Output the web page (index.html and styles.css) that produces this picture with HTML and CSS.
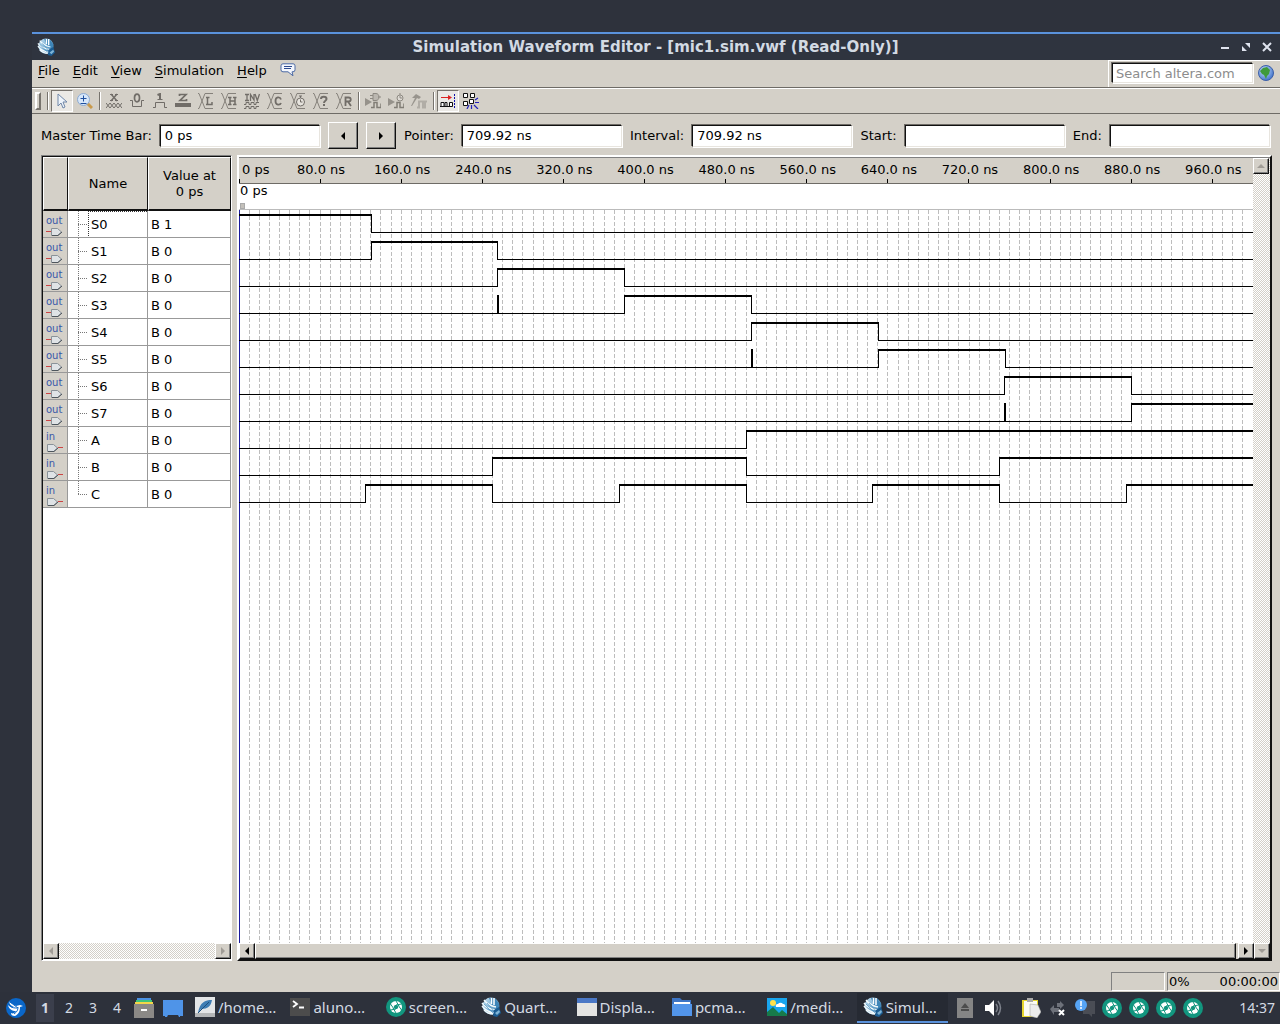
FILE: index.html
```
<!DOCTYPE html>
<html lang="en">
<head>
<meta charset="utf-8">
<title>Simulation Waveform Editor</title>
<link rel="stylesheet" href="styles.css">
</head>
<body>
<svg class="defs" aria-hidden="true">
  <defs>
    <linearGradient id="globeFill" x1="0" y1="0" x2="1" y2="1">
      <stop offset="0" stop-color="#cfe6f4"/><stop offset=".55" stop-color="#6fa9d0"/><stop offset="1" stop-color="#1d5f96"/>
    </linearGradient>
    <radialGradient id="earthFill" cx=".4" cy=".35" r=".7">
      <stop offset="0" stop-color="#cfe2ff"/><stop offset="1" stop-color="#3a6fc8"/>
    </radialGradient>
  </defs>
  <symbol id="quartus" viewBox="0 0 20 20">
    <circle cx="10" cy="9" r="8.500" fill="url(#globeFill)"/>
    <path d="M8 1l6 0 4 6-1 6-6-5z" fill="#3d85b8"/>
    <path d="M10.500 1v6M13 1v7" stroke="#fff" stroke-width="1.500"/>
    <path d="M1 6c3 4 8 6 13 7M1 9c3 4 7 6 12 7M3 13c3 3 5 4 9 4M3 3c3 4 7 6 12 7" fill="none" stroke="#f2fafd" stroke-width="1.400"/>
    <path d="M3 7l9 9M6 6l8 9" stroke="#4b8fbe" stroke-width=".7"/>
    <path d="M13 13l5-3 2 6-4 4-4-1z" fill="#1b5c92"/>
    <path d="M14 16l4-3 1 2-3 3z" fill="#7fb4d6"/>
  </symbol>
  <symbol id="aperture" viewBox="0 0 20 20">
    <circle cx="10" cy="10" r="10" fill="#12967f"/>
    <circle cx="10" cy="10" r="6" fill="#fff"/>
    <path d="M10 4l3 5M15.500 7l-5.500 1M15.500 13l-3.500-5M10 16l-3-5M4.500 13l5.500-1M4.500 7l3.500 5" stroke="#12967f" stroke-width="1"/>
    <path d="M8.800 8h2.400l1.200 2-1.200 2H8.800l-1.200-2z" fill="#12967f"/>
  </symbol>
  <symbol id="pin-out" viewBox="0 0 18 16">
    <path d="M0 10.500h5" stroke="#c44" />
    <path d="M5.500 7.500h6l4 3.500-4 3.500h-6z" fill="#dfe3e6" stroke="#8a9299"/>
    <path d="M6 14.500h6l4-3.500" fill="none" stroke="#4e565d"/>
  </symbol>
  <symbol id="pin-in" viewBox="0 0 18 16">
    <path d="M12 10.500h5" stroke="#c44"/>
    <path d="M1.500 7.500h6l4 3.500-4 3.500h-6z" fill="#dfe3e6" stroke="#8a9299"/>
    <path d="M2 14.500h6l4-3.500" fill="none" stroke="#4e565d"/>
  </symbol>
  <symbol id="bus" viewBox="0 0 16 16">
    <path d="M0 .5h1l6 15h8M0 15.500h1L7 .5h8" fill="none" stroke="#85817b"/>
  </symbol>
</svg>

<main class="window">
  <header class="titlebar">
    <svg class="app-icon"><use href="#quartus"/></svg>
    <h1>Simulation Waveform Editor - [mic1.sim.vwf (Read-Only)]</h1>
    <div class="window-controls">
      <button type="button" aria-label="Minimize"><svg viewBox="0 0 10 10"><path d="M1 6h8" stroke-width="2"/></svg></button>
      <button type="button" aria-label="Restore"><svg viewBox="0 0 10 10"><path d="M4 1h5v5zM1 4v5h5z" fill="#dfe3ee" stroke="none"/></svg></button>
      <button type="button" aria-label="Close"><svg viewBox="0 0 10 10"><path d="M1 1l8 8M9 1L1 9" stroke-width="2"/></svg></button>
    </div>
  </header>

  <div class="menubar">
    <nav>
      <a href="#file"><u>F</u>ile</a>
      <a href="#edit"><u>E</u>dit</a>
      <a href="#view"><u>V</u>iew</a>
      <a href="#simulation"><u>S</u>imulation</a>
      <a href="#help"><u>H</u>elp</a>
      <a href="#feedback" aria-label="Feedback"><svg class="bubble" viewBox="0 0 16 14"><path d="M3 .8h10q2 0 2 2v4q0 2-2 2h-1l1 4-5-4H3q-2 0-2-2v-4q0-2 2-2z" fill="#f4f7fd" stroke="#4c6aa5"/><path d="M4 3.500h8M4 5.500h7" stroke="#2c4a90"/></svg></a>
    </nav>
    <form class="search">
      <input type="text" aria-label="Search altera.com" placeholder="Search altera.com">
      <button type="button" aria-label="Search"><svg viewBox="0 0 16 16"><circle cx="8" cy="8" r="7.500" fill="url(#earthFill)" stroke="#3c5fa8"/><path d="M2 6l3-3 4-1 3 3-1 4-2 2-1 3-2-4-2-1z" fill="#3f9a3c"/></svg></button>
    </form>
  </div>

  <div class="toolbar" role="toolbar" aria-label="Waveform tools">
    <span class="grip"></span><span class="divider"></span>
    <button type="button" class="pressed" aria-label="Selection tool"><svg viewBox="0 0 16 16"><path d="M4 1v12l3-3 2 5 2-1-2-5h4z" fill="#eef4fb" stroke="#7087a8"/></svg></button>
    <button type="button" aria-label="Zoom tool"><svg viewBox="0 0 16 16"><path d="M10 10l5 5" stroke="#c99a4c" stroke-width="3"/><circle cx="6.500" cy="6.500" r="6" fill="#d7e7fa" stroke="#8ba9d2"/><path d="M3.500 5.500h6M6.500 2.500v6M3.500 10.500h6" stroke="#1f4f9f"/></svg></button>
    <span class="divider"></span>
    <button type="button" aria-label="Forcing unknown"><svg viewBox="0 0 16 16"><path d="M4 1.500h3M9 1.500h3M4 7.500h3M9 7.500h3" stroke="#716d68"/><path d="M5 1l6 7M11 1L5 8" stroke="#716d68" stroke-width="1.500"/><path d="M0 10l4 5 4-5 4 5 4-5M0 15l4-5 4 5 4-5 4 5" fill="none" stroke="#716d68"/></svg></button>
    <button type="button" aria-label="Forcing low"><svg viewBox="0 0 16 16"><ellipse cx="8" cy="5" rx="2.500" ry="3.800" fill="none" stroke="#716d68" stroke-width="1.700"/><path d="M1 7.500h2.500v6h9v-6H15" fill="none" stroke="#716d68"/></svg></button>
    <button type="button" aria-label="Forcing high"><svg viewBox="0 0 16 16"><path d="M5.500 2L8 1v6" fill="none" stroke="#716d68" stroke-width="2"/><path d="M5.500 6.500h5M1 14.500h2.500v-5h9v5H15" fill="none" stroke="#716d68"/></svg></button>
    <button type="button" aria-label="High impedance"><svg viewBox="0 0 16 16"><path d="M4.500 3V1.500H11L5 7.500h6.500V6" fill="none" stroke="#716d68" stroke-width="1.700"/><path d="M0 12h16" stroke="#716d68" stroke-width="4"/></svg></button>
    <button type="button" aria-label="Weak low"><svg viewBox="0 0 16 16"><use href="#bus"/><path d="M8 4.500h3.500M9.500 4.500v7M8 11.500h6V9" fill="none" stroke="#716d68" stroke-width="1.500"/></svg></button>
    <button type="button" aria-label="Weak high"><svg viewBox="0 0 16 16"><use href="#bus"/><path d="M7 4.500h3.500M12 4.500h3.500M7 11.500h3.500M12 11.500h3.500M9 4.500v7M14 4.500v7M9 8h5" fill="none" stroke="#716d68" stroke-width="1.500"/></svg></button>
    <button type="button" aria-label="Invert"><svg viewBox="0 0 16 16"><path d="M1 1.500h4M3 1v6M1 7.500h4M6.500 8V1.500L10 7V1M11 1l2.300 6.500L15.500 1" fill="none" stroke="#716d68" stroke-width="1.300"/><path d="M0 11.500h2v-2h3v2h2v-2h3v2h2v-2h3M0 15.500h2v-2h3v2h2v-2h3v2h2v-2h3" fill="none" stroke="#716d68"/></svg></button>
    <button type="button" aria-label="Count value"><svg viewBox="0 0 16 16"><use href="#bus"/><path d="M14 6.500c-1-3-5.500-3-5.500 1.500s4.500 4.500 5.500 2" fill="none" stroke="#716d68" stroke-width="1.800"/></svg></button>
    <button type="button" aria-label="Overwrite clock"><svg viewBox="0 0 16 16"><use href="#bus"/><circle cx="10.500" cy="9" r="4" fill="#e7e4de" stroke="#716d68"/><path d="M10.500 3v2M9 3h3M10.500 6.500V9h2" fill="none" stroke="#716d68"/></svg></button>
    <button type="button" aria-label="Arbitrary value"><svg viewBox="0 0 16 16"><use href="#bus"/><path d="M8 6c0-3 5.500-3 5.500 0 0 2-2.500 1.500-2.500 4M11 11v2" fill="none" stroke="#716d68" stroke-width="2"/></svg></button>
    <button type="button" aria-label="Random values"><svg viewBox="0 0 16 16"><use href="#bus"/><path d="M9.500 13V4.500h3c3 0 3 4 0 4h-3M12 8.500l3 4.500" fill="none" stroke="#716d68" stroke-width="1.800"/></svg></button>
    <span class="divider"></span>
    <button type="button" aria-label="Run functional simulation"><svg viewBox="0 0 16 16"><path d="M0 5l7 4-7 4z" fill="#96928b"/><path d="M5 2.500h3M5 5.500h3M8 .5h3c4 0 4 7 0 7H8zM13 4h3" fill="#bbb7b0" stroke="#8d8982"/><path d="M6 14.500h3v-5h3v5h4v-4" fill="none" stroke="#817d76" stroke-width="1.500"/></svg></button>
    <button type="button" aria-label="Run timing simulation"><svg viewBox="0 0 16 16"><path d="M0 5l7 4-7 4z" fill="#96928b"/><circle cx="12" cy="5" r="3" fill="#dedad4" stroke="#8d8982"/><path d="M12 0v2M12 3v2h2" stroke="#8d8982" fill="none"/><path d="M6 14.500h3v-5h3v5h4v-4" fill="none" stroke="#817d76" stroke-width="1.500"/></svg></button>
    <button type="button" aria-label="Generate testbench"><svg viewBox="0 0 16 16"><path d="M1 5l4-4 5 3-2 2-2-1-5 8H0l4-8z" fill="#98948d"/><path d="M6 14.500h2v-6h4v6h2v-6h2" fill="none" stroke="#b1ada6" stroke-width="2"/></svg></button>
    <span class="divider"></span>
    <button type="button" class="pressed" aria-label="Snap to transition"><svg viewBox="0 0 16 16"><path d="M1 4.500h8" stroke="#d22"/><path d="M8 2l4 2.500L8 7z" fill="#d22"/><path d="M1 9.500h3v4H1zM5 9.500h2v4H5zM9.500 9.500h3v4h-3z" fill="#fff" stroke="#111"/><path d="M0 13.500h10" stroke="#111"/><path d="M14.500 1v14" stroke="#11a" stroke-dasharray="2 1"/></svg></button>
    <button type="button" aria-label="Snap to grid"><svg viewBox="0 0 16 16"><path d="M.5.500h4v4h-4zM7.500.500h4v4h-4zM.5 8.500h4v4h-4zM6.500 6.500h4v4h-4z" fill="#fff" stroke="#111"/><path d="M12 7l3-2M12 9.500h4M11 12l4 4M8.500 12v4M6 12l-2 4" stroke="#22b" stroke-width="1.200"/></svg></button>
  </div>

  <form class="timebar">
    <label for="master">Master Time Bar:</label><input id="master" type="text" value="0 ps">
    <button type="button" class="raised" aria-label="Previous transition"><i class="arrow left"></i></button>
    <button type="button" class="raised" aria-label="Next transition"><i class="arrow right"></i></button>
    <label for="pointer">Pointer:</label><input id="pointer" type="text" value="709.92 ns">
    <label for="interval">Interval:</label><input id="interval" type="text" value="709.92 ns">
    <label for="start">Start:</label><input id="start" type="text">
    <label for="end">End:</label><input id="end" type="text">
  </form>

  <div class="panes">
    <section class="names">
      <table>
        <thead><tr><th class="kind"></th><th class="name">Name</th><th class="value">Value at<br>0 ps</th></tr></thead>
        <tbody>
          <tr class="focused"><td><span>out</span><svg><use href="#pin-out"/></svg></td><td>S0</td><td>B 1</td></tr>
          <tr><td><span>out</span><svg><use href="#pin-out"/></svg></td><td>S1</td><td>B 0</td></tr>
          <tr><td><span>out</span><svg><use href="#pin-out"/></svg></td><td>S2</td><td>B 0</td></tr>
          <tr><td><span>out</span><svg><use href="#pin-out"/></svg></td><td>S3</td><td>B 0</td></tr>
          <tr><td><span>out</span><svg><use href="#pin-out"/></svg></td><td>S4</td><td>B 0</td></tr>
          <tr><td><span>out</span><svg><use href="#pin-out"/></svg></td><td>S5</td><td>B 0</td></tr>
          <tr><td><span>out</span><svg><use href="#pin-out"/></svg></td><td>S6</td><td>B 0</td></tr>
          <tr><td><span>out</span><svg><use href="#pin-out"/></svg></td><td>S7</td><td>B 0</td></tr>
          <tr><td><span>in</span><svg><use href="#pin-in"/></svg></td><td>A</td><td>B 0</td></tr>
          <tr><td><span>in</span><svg><use href="#pin-in"/></svg></td><td>B</td><td>B 0</td></tr>
          <tr><td><span>in</span><svg><use href="#pin-in"/></svg></td><td>C</td><td>B 0</td></tr>
        </tbody>
      </table>
      <div class="scroll horizontal">
        <button type="button" disabled aria-label="Scroll names left"><i class="arrow left"></i></button>
        <span class="track"></span>
        <button type="button" disabled aria-label="Scroll names right"><i class="arrow right"></i></button>
      </div>
    </section>

    <section class="waves">
      <div class="view">
        <div class="plot">
          <div class="ruler">
            <span>0 ps</span><span>80.0 ns</span><span>160.0 ns</span><span>240.0 ns</span><span>320.0 ns</span><span>400.0 ns</span><span>480.0 ns</span><span>560.0 ns</span><span>640.0 ns</span><span>720.0 ns</span><span>800.0 ns</span><span>880.0 ns</span><span>960.0 ns</span>
          </div>
          <div class="master-strip"><span>0 ps</span><i class="handle"></i></div>
          <div class="canvas">
            <svg class="grid" aria-hidden="true"></svg>
            <div class="signals"></div>
          </div>
        </div>
        <div class="scroll vertical">
          <button type="button" disabled aria-label="Scroll up"><i class="arrow up"></i></button>
          <span class="track"></span>
        </div>
      </div>
      <div class="scroll horizontal">
        <button type="button" aria-label="Scroll waves left"><i class="arrow left"></i></button>
        <span class="thumb"></span>
        <button type="button" aria-label="Scroll waves right"><i class="arrow right"></i></button>
        <button type="button" disabled aria-label="Scroll down"><i class="arrow down"></i></button>
      </div>
    </section>
  </div>

  <footer class="status"><span class="well message"></span><span class="well progress"><span>0%</span><span>00:00:00</span></span></footer>
</main>

<footer class="taskbar">
  <button type="button" class="start" aria-label="Menu"><svg viewBox="0 0 20 20"><circle cx="10" cy="10" r="10" fill="#0a67c9"/><path d="M3 4l7 4 4-1 3 1-3 1c0 4-1 7-5 9-3 0-4-1-4-3 2 1 4 0 5-2-4 0-7-2-8-6 2 2 4 3 6 2-3-1-5-3-5-6z" fill="#fff"/><path d="M4 4l8 6M4 8c2 2 5 2 7 2M12 9c0 3-1 5-4 7" stroke="#0a67c9" fill="none"/></svg></button>
  <div class="desktops">
    <button type="button" class="current">1</button><button type="button">2</button><button type="button">3</button><button type="button">4</button>
  </div>
  <div class="launchers">
    <button type="button" aria-label="Files"><svg viewBox="0 0 20 20"><path d="M3 0h14v3H3z" fill="#4b91e2"/><path d="M2 2h16v3H2z" fill="#3fc47a"/><path d="M1 4h18v3H1z" fill="#f3d648"/><path d="M0 6h20v14H0z" fill="#8b8986"/><path d="M7 11h6v2H7z" fill="#fff"/></svg></button>
    <button type="button" aria-label="Show desktop"><svg viewBox="0 0 20 20"><path d="M0 2h20v16h-3v1h-1l-1-2H5l-1 2H2v-1H0z" fill="#4f94e8"/></svg></button>
  </div>
  <div class="tasks">
    <button type="button"><svg viewBox="0 0 20 20"><path d="M0 0h20v20H0z" fill="#e3e5e7"/><path d="M0 16h20v4H0z" fill="#b4b6b8"/><path d="M3 16C5 5 10 3 17 3c-1 6-4 9-11 9" fill="#3f7db4"/><path d="M3 16L14 5" stroke="#1d4e7c"/></svg><span>/home…</span></button>
    <button type="button"><svg viewBox="0 0 20 20"><path d="M0 1h20v18H0z" fill="#4c4c4c"/><path d="M3 4l4 3-4 3M9 10.500h5" fill="none" stroke="#fff" stroke-width="1.800"/></svg><span>aluno…</span></button>
    <button type="button"><svg viewBox="0 0 20 20"><use href="#aperture"/></svg><span>screen…</span></button>
    <button type="button"><svg viewBox="0 0 20 20"><use href="#quartus"/></svg><span>Quart…</span></button>
    <button type="button"><svg viewBox="0 0 20 20"><path d="M0 1h20v18H0z" fill="#e4e4e2"/><path d="M0 1h20v5H0z" fill="#4b78c6"/></svg><span>Displa…</span></button>
    <button type="button"><svg viewBox="0 0 20 20"><path d="M0 1h8l2 2h9v14H0z" fill="#3c74c4"/><path d="M2 5h16v2H2z" fill="#fff"/><path d="M0 7h20v12H0z" fill="#5295ea"/></svg><span>pcma…</span></button>
    <button type="button"><svg viewBox="0 0 20 20"><path d="M0 1h20v18H0z" fill="#19a5ee"/><circle cx="6" cy="6" r="3" fill="#ffe14a"/><path d="M9 10a2 2 0 012-3 3 3 0 015 0 2 2 0 012 3z" fill="#fff"/><path d="M0 19v-4l6-5 6 6 3-3 5 4v2z" fill="#177a4a"/></svg><span>/medi…</span></button>
    <button type="button" class="active"><svg viewBox="0 0 20 20"><use href="#quartus"/></svg><span>Simul…</span></button>
  </div>
  <div class="tray">
    <button type="button" aria-label="Eject"><svg viewBox="0 0 20 20"><path d="M2 0h16v20H2z" fill="#858585"/><path d="M10 5l4 5H6zM6 11h8v2H6z" fill="#4c4c4c"/></svg></button>
    <button type="button" aria-label="Volume"><svg viewBox="0 0 20 20"><path d="M1 7h4l5-5v16l-5-5H1z" fill="#fff"/><path d="M12 6q3 4 0 8M14 3q5 7 0 14" fill="none" stroke="#7d818b" stroke-width="1.500"/></svg></button>
  </div>
  <div class="tray wide">
    <button type="button" aria-label="Clipboard"><svg viewBox="0 0 20 20"><path d="M1 2h16v17H1z" fill="#e6d52f"/><path d="M3 3h13v15H3z" fill="#fbfbf4"/><path d="M6 0h6v4H6z" fill="#aaa"/><path d="M9 6l8 1 3 7-4 6-7-2z" fill="#ececec" stroke="#999" stroke-width=".5"/></svg></button>
    <button type="button" aria-label="Network"><svg viewBox="0 0 20 20"><path d="M2 11l4-4v3h5v4H6v3zM16 7l-4-4v2H9v4h3v2z" fill="#6d717a"/><path d="M11 12l5 5M16 12l-5 5" stroke="#fff" stroke-width="2"/></svg></button>
    <button type="button" aria-label="Notifications"><svg viewBox="0 0 20 20"><path d="M8 3h12v13h-3v3l-3-3H8z" fill="#4a4d55"/><circle cx="6" cy="7" r="6" fill="#56a4f5"/><path d="M6 3v5M6 9v2" stroke="#fff" stroke-width="1.500"/></svg></button>
    <button type="button" aria-label="Screenshot 1"><svg><use href="#aperture"/></svg></button>
    <button type="button" aria-label="Screenshot 2"><svg><use href="#aperture"/></svg></button>
    <button type="button" aria-label="Screenshot 3"><svg><use href="#aperture"/></svg></button>
    <button type="button" aria-label="Screenshot 4"><svg><use href="#aperture"/></svg></button>
  </div>
  <time>14:37</time>
</footer>
<script src="script.js"></script>
</body>
</html>
```
FILE: styles.css
```
* { box-sizing: border-box; }
:root {
  --face: #d4d0c8;
  --shade: #808080;
}
body {
  margin: 0;
  min-height: 100vh;
  display: flex;
  flex-direction: column;
  background: #2e323c;
  color: #000;
  font: 13px/18px "DejaVu Sans", sans-serif;
}
button { font: inherit; color: inherit; background: none; border: 0; padding: 0; margin: 0; display: flex; align-items: center; justify-content: center; }
input { font: inherit; min-width: 0; height: 22px; padding: 0 4px; background: #fff; border: 1px solid; border-color: #111 #e8e5df #e8e5df #111; border-radius: 0; outline: 0; box-shadow: -1px -1px 0 #6e6b66, 1px 1px 0 #fff; }
.defs { position: absolute; width: 0; height: 0; }

.window { flex: 1; margin: 32px 0 0 32px; border-top: 2px solid #5a92dc; background: var(--face); display: flex; flex-direction: column; }
.titlebar { height: 26px; display: flex; align-items: center; background: #2f343f; color: #d3dae3; padding: 0 8px 0 5px; }
.titlebar h1 { flex: 1; margin: 0; text-align: center; font-size: 15px; line-height: 18px; padding-left: 36px; }
.app-icon { width: 18px; height: 18px; }
.window-controls { display: flex; gap: 11px; }
.window-controls svg { width: 10px; height: 10px; stroke: #dfe3ee; }

.menubar { display: flex; justify-content: space-between; height: 28px; border-bottom: 1px solid #6e6b66; }
.menubar nav { display: flex; gap: 13px; padding: 2px 6px 0; align-items: flex-start; }
.menubar a { color: inherit; text-decoration: none; }
.menubar u { text-underline-offset: 2px; }
.bubble { width: 16px; height: 14px; display: block; margin-top: 1px; }
.search { display: flex; align-items: center; gap: 5px; padding: 0 6px 2px 3px; border-top: 1px solid #fff; border-left: 1px solid #fff; }
.search input { width: 141px; height: 20px; padding: 0 3px; }
.search input::placeholder { color: #8c8c8c; opacity: 1; }
.search svg { width: 16px; height: 16px; display: block; }

.toolbar { display: flex; align-items: center; height: 26px; padding: 0 3px; gap: 1px; border-top: 1px solid #fff; border-bottom: 1px solid #6e6b66; }
.toolbar button { width: 22px; height: 22px; }
.toolbar svg { width: 16px; height: 16px; flex: none; }
.toolbar .pressed { border: 1px solid; border-color: #77736d #fff #fff #77736d; background: #ebe9e5; }
.grip { width: 6px; height: 18px; margin-right: 3px; border: 2px solid; border-color: #fff #77736d #77736d #fff; }
.divider { width: 2px; height: 18px; margin: 0 1px 0 2px; border-left: 1px solid #77736d; border-right: 1px solid #fff; }

.timebar { display: flex; align-items: center; gap: 8px; padding: 8px 10px 6px 9px; }
.timebar input { flex: 1; }
.raised { width: 30px; height: 27px; }
.raised, .scroll button, .thumb { background: var(--face); border: 1px solid; border-color: #fff #111 #111 #fff; box-shadow: inset -1px -1px 0 var(--shade); }

.arrow { width: 0; height: 0; border: 4px solid transparent; }
.arrow.left { border-right-color: #000; border-left: 0; }
.arrow.right { border-left-color: #000; border-right: 0; }
.arrow.up { border-bottom-color: #000; border-top: 0; }
.arrow.down { border-top-color: #000; border-bottom: 0; }
:disabled .left { border-right-color: #a09c96; }
:disabled .right { border-left-color: #a09c96; }
:disabled .up { border-bottom-color: #a09c96; }
:disabled .down { border-top-color: #a09c96; }

.panes { flex: 1; display: flex; gap: 5px; padding: 0 8px 0 9px; }
.names { width: 191px; display: flex; flex-direction: column; justify-content: space-between; background: #fff; border: 1px solid; border-color: var(--shade) #fff #fff var(--shade); box-shadow: inset 1px 1px 0 #111; padding: 1px 0 1px 1px; }
.names table { width: 100%; border-collapse: separate; border-spacing: 0; table-layout: fixed; }
.names th { height: 54px; padding: 0; background: var(--face); font-weight: 400; line-height: 16px; border: 1px solid; border-color: #fff #111 #111 #fff; border-bottom-width: 2px; }
.kind { width: 25px; }
.name { width: 80px; }
.names td { height: 27px; padding: 2px 3px 0; border: solid #999; border-width: 0 1px 1px 0; }
.names td:first-child { background: var(--face); padding: 4px 0 0 3px; line-height: 0; color: #3857a8; vertical-align: top; }
.names td span { display: block; font-size: 10px; line-height: 12px; }
.names td svg { display: block; width: 18px; height: 16px; margin-top: -6px; }
.names td:nth-child(2) { padding-left: 23px; background: repeating-linear-gradient(90deg, #777 0 1px, transparent 1px 2px) 10px 13px / 10px 1px no-repeat, repeating-linear-gradient(#777 0 1px, transparent 1px 2px) 10px 0 / 1px 100% no-repeat; }
.names tr:last-child td:nth-child(2) { background-size: 10px 1px, 1px 13px; }
.names .focused td:nth-child(2) { background: repeating-linear-gradient(90deg, #777 0 1px, transparent 1px 2px) 10px 13px / 10px 1px no-repeat, repeating-linear-gradient(#777 0 1px, transparent 1px 2px) 10px 0 / 1px 100% no-repeat, repeating-linear-gradient(#333 0 1px, transparent 1px 2px) 20px 0 / 1px 100% no-repeat, repeating-linear-gradient(90deg, #333 0 1px, transparent 1px 2px) 20px 0 / 100% 1px no-repeat; }

.scroll { display: flex; flex: none; }
.horizontal { height: 16px; }
.vertical { width: 17px; flex-direction: column; }
.scroll button { width: 16px; height: 16px; }
.track, .vertical { background: repeating-conic-gradient(#fff 0 25%, #d4d0c8 0 50%) 0 0 / 2px 2px; }
.track, .thumb { flex: 1; }
.thumb { margin-right: 2px; }

.waves { flex: 1; min-width: 0; display: flex; flex-direction: column; background: var(--face); border: 2px solid; border-color: #fff #111 #111 #fff; box-shadow: inset 0 1px 0 var(--shade); padding-top: 1px; }
.view { flex: 1; display: flex; }
.plot { flex: 1; min-width: 0; display: flex; flex-direction: column; }
.ruler { display: flex; height: 26px; border-bottom: 1px solid #6e6b66; white-space: nowrap; overflow: hidden; }
.ruler span { width: 8%; text-align: center; padding: 3px 0 0 2px; background: linear-gradient(#000, #000) 50% 21px / 1px 4px no-repeat; }
.ruler span:first-child { width: 4%; text-align: left; padding-left: 3px; background-position: 0 21px; }
.master-strip { display: flex; flex-direction: column; justify-content: space-between; height: 26px; padding-left: 1px; background: #fff; border-bottom: 1px solid #bbb; line-height: 14px; }
.handle { width: 5px; height: 6px; background: #c3c0ba; border: 1px solid #aaa; }
.canvas { flex: 1; display: grid; background: #fff; box-shadow: inset 1px 0 0 #1a1a9c; overflow: hidden; }
.canvas > * { grid-area: 1 / 1; }
.grid { width: 100%; height: 100%; min-height: 300px; }
.grid line { stroke: #bdbdbd; stroke-dasharray: 4 2; shape-rendering: crispEdges; }
.signals { display: flex; flex-direction: column; padding-top: 1px; min-width: 0; }
.signals svg { width: 100%; height: 27px; display: block; }
.signals line { stroke: #000; shape-rendering: crispEdges; }
.signals .high { stroke-width: 2px; }

.status { display: flex; justify-content: flex-end; gap: 2px; height: 31px; padding-top: 11px; }
.well { border: 1px solid; border-color: var(--shade) #fff #fff var(--shade); height: 19px; line-height: 17px; }
.message { width: 54px; }
.progress { width: 113px; display: flex; justify-content: space-between; padding: 0 1px; }

.taskbar { height: 32px; display: flex; align-items: center; background: #2d313b; color: #d3dae3; font: 15px/20px "Noto Sans", sans-serif; padding: 0 5px 0 6px; }
.taskbar svg { width: 20px; height: 20px; flex: none; display: block; }
.desktops { display: flex; margin: 0 3px 0 10px; gap: 6px; }
.desktops button { width: 18px; height: 28px; font-size: 14px; }
.desktops .current { background: #3b3f4c; font-weight: 700; }
.launchers { display: flex; gap: 9px; padding: 0 6px 0 5px; }
.tasks { flex: 1; display: flex; gap: 4px; min-width: 0; }
.tasks button { flex: 1 1 0; min-width: 0; height: 30px; justify-content: flex-start; gap: 3px; padding-left: 6px; border-bottom: 2px solid transparent; }
.tasks .active { background: #262a33; border-color: #5a92dc; }
.tray { display: flex; gap: 9px; padding-left: 7px; }
.tray.wide { gap: 7px; padding-left: 17px; }
.taskbar time { width: 72px; text-align: right; font-size: 14px; }
```
FILE: script.js
```
const NS = "http://www.w3.org/2000/svg";
const SPAN = 1000;
const HIGH = 4;
const LOW = 21.5;

// Level of each signal over time: [start, end] intervals (ns) in which it is high.
const signals = {
  S0: [[0, 130.6]],
  S1: [[130.6, 254.8]],
  S2: [[254.8, 380]],
  S3: [[254.8, 255.8], [380, 505]],
  S4: [[505, 630.6]],
  S5: [[505, 506], [630.6, 755.6]],
  S6: [[755, 880]],
  S7: [[755, 756], [880, 1000]],
  A: [[500, 1000]],
  B: [[250, 500], [750, 1000]],
  C: [[125, 250], [375, 500], [625, 750], [875, 1000]]
};

function line(svg, t1, y1, t2, y2, cls) {
  const el = document.createElementNS(NS, "line");
  el.setAttribute("x1", t1 * 100 / SPAN + "%");
  el.setAttribute("x2", t2 * 100 / SPAN + "%");
  el.setAttribute("y1", y1);
  el.setAttribute("y2", y2);
  if (cls) el.setAttribute("class", cls);
  svg.append(el);
}

const grid = document.querySelector(".grid");
for (let t = 10; t < SPAN; t += 10) line(grid, t, 0, t, "100%");

const host = document.querySelector(".signals");
for (const [name, pulses] of Object.entries(signals)) {
  const svg = document.createElementNS(NS, "svg");
  svg.setAttribute("role", "img");
  svg.setAttribute("aria-label", name);
  let last = 0;
  for (const [from, to] of pulses) {
    line(svg, last, LOW, from, LOW);
    line(svg, from, HIGH, to, HIGH, "high");
    if (from > 0) line(svg, from, HIGH - 1, from, LOW + 0.5);
    if (to < SPAN) line(svg, to, HIGH - 1, to, LOW + 0.5);
    last = to;
  }
  if (last < SPAN) line(svg, last, LOW, SPAN, LOW);
  host.append(svg);
}
```
